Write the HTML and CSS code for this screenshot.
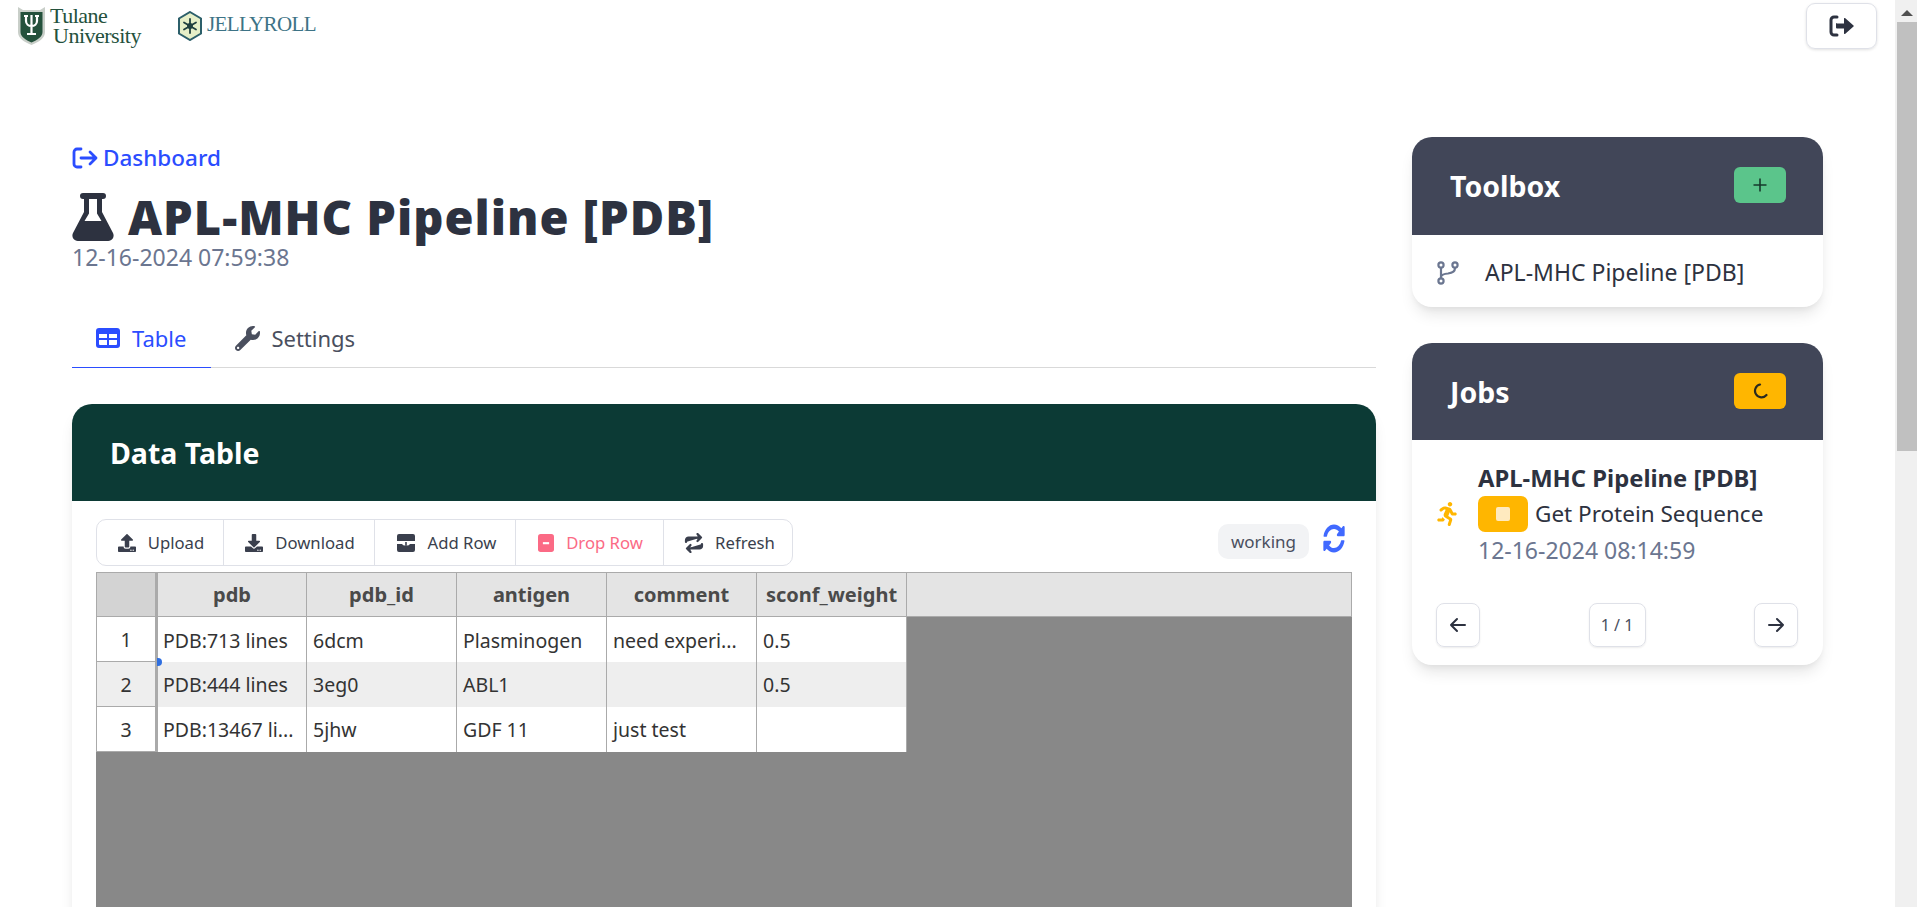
FILE: index.html
```html
<!DOCTYPE html>
<html lang="en">
<head>
<meta charset="utf-8">
<title>APL-MHC Pipeline [PDB]</title>
<link rel="stylesheet" href="styles.css">
</head>
<body>
<div class="page">
	<header class="topbar">
		<div class="logos">
			<div class="logo-tulane">
				<svg class="shield" viewBox="0 0 27 38">
					<path d="M0 0l5 3h17l5-3v25c0 6-6 10-13.500 13C6 35 0 31 0 25z" fill="#c9cfc9"/>
					<path d="M2.500 5h22v20c0 4.500-5 8-11 10.500C7.500 33 2.500 29.500 2.500 25z" fill="#24513c"/>
					<path d="M13.500 8v19M9 27h9M6 9h4M17 9h4M8 9v5c0 3 2.500 5 5.500 5s5.500-2 5.500-5V9" fill="none" stroke="#fff" stroke-width="2.200"/>
				</svg>
				<div class="tulane-text"><span>Tulane</span><span class="tulane-low">University</span></div>
			</div>
			<div class="logo-jelly">
				<svg class="hex" viewBox="0 0 24 30">
					<path d="M12 1l11 6.500v15L12 29 1 22.500v-15z" fill="#e6efc8" stroke="#2c5f6a" stroke-width="2"/>
					<g stroke="#1f3f3f" stroke-width="1.800" stroke-linecap="round">
						<path d="M12 8v14M6 11.500l12 7M18 11.500l-12 7"/>
					</g>
					<circle cx="12" cy="15" r="3" fill="#1f3f3f"/>
				</svg>
				<span class="jelly-text">JELLYROLL</span>
			</div>
		</div>
		<button class="logout" type="button">
			<svg viewBox="0 0 26 22" width="26" height="22">
				<path d="M8 2H5a3 3 0 0 0-3 3v12a3 3 0 0 0 3 3h3" fill="none" stroke="#2d3240" stroke-width="3" stroke-linecap="round"/>
				<path d="M8 8.500h7V3.800a.8.800 0 0 1 1.300-.6l8.200 7.200a.8.800 0 0 1 0 1.200l-8.200 7.200a.8.800 0 0 1-1.300-.6v-4.700H8a1 1 0 0 1-1-1v-3.500a1 1 0 0 1 1-1z" fill="#2d3240"/>
			</svg>
		</button>
	</header>

	<div class="layout">
		<main class="main-col">
			<a class="back-link" href="#">
				<svg viewBox="0 0 26 24" width="26" height="24" fill="none" stroke="currentColor" stroke-width="2.800" stroke-linecap="round" stroke-linejoin="round">
					<path d="M9 3H5a3 3 0 0 0-3 3v12a3 3 0 0 0 3 3h4M9 12h15M18 6l6 6-6 6"/>
				</svg>
				Dashboard
			</a>
			<h1 class="title">
				<svg class="flask" viewBox="0 0 42 48" width="42" height="48">
					<path fill-rule="evenodd" fill="#2d3240" d="M11 0h20a3 3 0 0 1 0 6h-1v13l11 21a5.500 5.500 0 0 1-5 8H6a5.500 5.500 0 0 1-5-8l11-21V6h-1a3 3 0 0 1 0-6zM17 6v14.500L12.500 28h17L25 20.500V6z"/>
				</svg>
				APL-MHC Pipeline [PDB]
			</h1>
			<div class="stamp">12-16-2024 07:59:38</div>

			<nav class="tabs">
				<a class="tab tab-active" href="#">
					<svg viewBox="0 0 24 20" width="24" height="20">
						<rect width="24" height="20" rx="3" fill="currentColor"/>
						<path d="M3 6h8v4H3zM13 6h8v4h-8zM3 12h8v5H4a1 1 0 0 1-1-1zM13 12h8v4a1 1 0 0 1-1 1h-7z" fill="#fff"/>
					</svg>
					Table
				</a>
				<a class="tab tab-settings" href="#">
					<svg viewBox="0 0 512 512" width="25" height="25"><path fill="#4a4f5e" d="M507.73 109.1c-2.24-9.03-13.54-12.09-20.12-5.51l-74.36 74.36-67.88-11.31-11.31-67.88 74.36-74.36c6.62-6.62 3.43-17.9-5.66-20.16-47.38-11.74-99.55.91-136.58 37.93-39.64 39.64-50.55 97.1-34.05 147.2L18.74 402.76c-24.99 24.99-24.99 65.51 0 90.5 24.99 24.99 65.51 24.99 90.5 0l213.21-213.21c50.12 16.71 107.47 5.68 147.37-34.22 37.07-37.07 49.7-89.32 37.91-136.73zM64 472c-13.25 0-24-10.75-24-24 0-13.26 10.75-24 24-24s24 10.74 24 24c0 13.25-10.75 24-24 24z"/></svg>
					Settings
				</a>
			</nav>

			<section class="card data-card">
				<div class="card-head head-green"><h2>Data Table</h2></div>
				<div class="data-body">
					<div class="tool-row">
						<div class="toolbar">
							<button class="tool tool-upload" type="button">
								<svg viewBox="0 0 512 512" width="18" height="18"><path d="M296 384h-80c-13.3 0-24-10.7-24-24V192h-87.7c-17.8 0-26.7-21.5-14.1-34.1L242.3 5.700c7.500-7.500 19.800-7.500 27.300 0l152.200 152.200c12.600 12.600 3.700 34.100-14.100 34.100H320v168c0 13.300-10.700 24-24 24zm216-8v112c0 13.300-10.700 24-24 24H24c-13.300 0-24-10.700-24-24V376c0-13.300 10.700-24 24-24h136v8c0 30.900 25.100 56 56 56h80c30.900 0 56-25.100 56-56v-8h136c13.300 0 24 10.700 24 24zm-124 88c0-11-9-20-20-20s-20 9-20 20 9 20 20 20 20-9 20-20zm64 0c0-11-9-20-20-20s-20 9-20 20 9 20 20 20 20-9 20-20z"/></svg>
								Upload
							</button>
							<button class="tool tool-download" type="button">
								<svg viewBox="0 0 512 512" width="18" height="18"><path d="M216 0h80c13.300 0 24 10.700 24 24v168h87.700c17.800 0 26.700 21.500 14.100 34.100L269.700 378.300c-7.500 7.500-19.800 7.500-27.300 0L90.100 226.100c-12.600-12.600-3.700-34.100 14.100-34.100H192V24c0-13.300 10.700-24 24-24zm296 376v112c0 13.300-10.700 24-24 24H24c-13.300 0-24-10.700-24-24V376c0-13.300 10.700-24 24-24h146.700l49 49c20.100 20.100 52.500 20.100 72.600 0l49-49H488c13.300 0 24 10.700 24 24zm-124 88c0-11-9-20-20-20s-20 9-20 20 9 20 20 20 20-9 20-20zm64 0c0-11-9-20-20-20s-20 9-20 20 9 20 20 20 20-9 20-20z"/></svg>
								Download
							</button>
							<button class="tool tool-add" type="button">
								<svg viewBox="0 0 20 18" width="20" height="18">
									<path d="M3 0h14a2 2 0 0 1 2 2v5H1V2a2 2 0 0 1 2-2zM1 10h5l4 4 4-4h5v6a2 2 0 0 1-2 2H3a2 2 0 0 1-2-2z" fill="#3a3f4d"/>
									<path d="M10 8v6M7.500 11.500L10 14l2.500-2.500" fill="none" stroke="#3a3f4d" stroke-width="1.600"/>
								</svg>
								Add Row
							</button>
							<button class="tool tool-drop" type="button">
								<svg viewBox="0 0 18 20" width="16" height="18">
									<rect width="18" height="20" rx="3" fill="#fb6a85"/>
									<rect x="5.500" y="9" width="7" height="2.400" fill="#fff"/>
								</svg>
								Drop Row
							</button>
							<button class="tool tool-refresh" type="button">
								<svg viewBox="0 0 20 20" width="20" height="20" fill="none" stroke="#3a3f4d" stroke-width="2.200" stroke-linecap="round" stroke-linejoin="round">
									<path d="M2 9V7a2.500 2.500 0 0 1 2.500-2.500H17M13.500 1L17 4.500 13.500 8M18 11v2a2.500 2.500 0 0 1-2.500 2.500H3M6.500 12L3 15.500 6.500 19"/>
								</svg>
								Refresh
							</button>
						</div>
						<div class="status">
							<span class="status-chip">working</span>
							<svg viewBox="0 0 512 512" width="22" height="29" preserveAspectRatio="none"><path fill="#4069ff" d="M370.72 133.28C339.458 104.008 298.888 87.962 255.848 88c-77.458.068-144.328 53.178-162.791 126.85-1.344 5.363-6.122 9.15-11.651 9.15H24.103c-7.498 0-13.194-6.807-11.807-14.176C33.933 94.924 134.813 8 256 8c66.448 0 126.791 26.136 171.315 68.685L463.03 40.97C478.149 25.851 504 36.559 504 57.941V192c0 13.255-10.745 24-24 24H345.941c-21.382 0-32.09-25.851-16.971-40.971l41.75-41.749zM32 296h134.059c21.382 0 32.09 25.851 16.971 40.971l-41.75 41.75c31.262 29.273 71.835 45.319 114.876 45.28 77.418-.07 144.315-53.144 162.787-126.849 1.344-5.363 6.122-9.15 11.651-9.15h57.304c7.498 0 13.194 6.807 11.807 14.176C478.067 417.076 377.187 504 256 504c-66.448 0-126.791-26.136-171.315-68.685L48.97 471.03C33.851 486.149 8 475.441 8 454.059V320c0-13.255 10.745-24 24-24z"/></svg>
						</div>
					</div>
					<div class="grid-wrap">
						<table class="grid">
							<colgroup>
								<col class="col-index">
								<col class="col-data">
								<col class="col-data">
								<col class="col-data">
								<col class="col-data">
								<col class="col-data">
								<col>
							</colgroup>
							<thead>
								<tr>
									<th class="corner"></th>
									<th>pdb</th>
									<th>pdb_id</th>
									<th>antigen</th>
									<th>comment</th>
									<th>sconf_weight</th>
									<th></th>
								</tr>
							</thead>
							<tbody>
								<tr>
									<th class="row-head">1</th>
									<td class="first-cell">PDB:713 lines<i class="handle"></i></td>
									<td>6dcm</td>
									<td>Plasminogen</td>
									<td>need experi...</td>
									<td>0.5</td>
								</tr>
								<tr class="row-alt">
									<th class="row-head">2</th>
									<td class="pdb-cell">PDB:444 lines</td>
									<td>3eg0</td>
									<td>ABL1</td>
									<td></td>
									<td>0.5</td>
								</tr>
								<tr>
									<th class="row-head">3</th>
									<td class="pdb-cell">PDB:13467 li...</td>
									<td>5jhw</td>
									<td>GDF 11</td>
									<td>just test</td>
									<td></td>
								</tr>
							</tbody>
						</table>
					</div>
				</div>
			</section>
		</main>

		<aside class="side-col">
			<section class="card">
				<div class="card-head head-slate">
					<h2>Toolbox</h2>
					<button class="head-btn btn-green" type="button">
						<svg viewBox="0 0 16 16" width="16" height="16"><path d="M8 1.500v13M1.500 8h13" stroke="#17392c" stroke-width="1.600" fill="none"/></svg>
					</button>
				</div>
				<div class="tool-item">
					<svg viewBox="0 0 22 24" width="22" height="24" fill="none" stroke="#6b7690" stroke-width="2.200">
						<circle cx="4" cy="4" r="2.600"/>
						<circle cx="4" cy="20" r="2.600"/>
						<circle cx="18" cy="4" r="2.600"/>
						<path d="M4 7v10M18 7c0 4-3 5-7 5.500-3 .3-6 .8-7 3"/>
					</svg>
					<span>APL-MHC Pipeline [PDB]</span>
				</div>
			</section>

			<section class="card">
				<div class="card-head head-slate head-jobs">
					<h2>Jobs</h2>
					<button class="head-btn btn-amber" type="button">
						<svg viewBox="0 0 16 16" width="16" height="16"><path d="M8 1.500A6.500 6.500 0 1 0 14.500 12" stroke="#2a2a20" stroke-width="2.200" fill="none" stroke-linecap="round"/></svg>
					</button>
				</div>
				<div class="job">
					<svg class="runner" viewBox="0 0 416 512" width="20" height="24"><path fill="#ffb600" d="M272 96c26.510 0 48-21.490 48-48S298.510 0 272 0s-48 21.490-48 48 21.490 48 48 48zM113.690 317.470l-14.800 34.520H32c-17.670 0-32 14.330-32 32s14.330 32 32 32h77.450c19.250 0 36.580-11.440 44.110-29.090l8.790-20.520-10.670-6.300c-17.320-10.230-30.060-25.370-37.990-42.610zM384 223.990h-44.030l-26.060-53.250c-12.500-25.550-35.450-44.230-61.780-50.940l-71.080-21.140c-28.300-6.800-57.770-.55-80.840 17.140l-39.670 30.410c-14.030 10.750-16.690 30.830-5.920 44.860s30.840 16.660 44.860 5.920l39.690-30.410c7.670-5.890 17.440-8 25.270-6.140l14.700 4.370-37.460 87.390c-12.620 29.480-1.310 64.010 26.300 80.310l84.980 50.170-27.470 87.730c-5.280 16.860 4.110 34.810 20.970 40.090 3.190 1 6.410 1.480 9.580 1.480 13.610 0 26.230-8.770 30.520-22.450l31.640-101.060c5.910-20.770-2.890-43.080-21.640-54.390l-61.240-36.140 31.310-78.280 20.270 41.430c8 16.340 24.920 26.890 43.110 26.890H384c17.670 0 32-14.330 32-32s-14.330-31.990-32-31.990z"/></svg>
					<div class="job-info">
						<div class="job-name">APL-MHC Pipeline [PDB]</div>
						<div class="job-step"><span class="step-badge"><i></i></span>Get Protein Sequence</div>
						<div class="job-time">12-16-2024 08:14:59</div>
					</div>
				</div>
				<div class="pager">
					<button class="page-btn" type="button">
						<svg viewBox="0 0 18 16" width="18" height="16" fill="none" stroke="#2d3240" stroke-width="2" stroke-linecap="round" stroke-linejoin="round"><path d="M16 8H2M8 2L2 8l6 6"/></svg>
					</button>
					<span class="page-btn page-count">1 / 1</span>
					<button class="page-btn" type="button">
						<svg viewBox="0 0 18 16" width="18" height="16" fill="none" stroke="#2d3240" stroke-width="2" stroke-linecap="round" stroke-linejoin="round"><path d="M2 8h14M10 2l6 6-6 6"/></svg>
					</button>
				</div>
			</section>
		</aside>
	</div>
</div>

<div class="scrollbar">
	<div class="scroll-arrow"></div>
	<div class="scroll-thumb"></div>
</div>
</body>
</html>
```

FILE: styles.css
```css
* {
	box-sizing: border-box;
	margin: 0;
	padding: 0;
}

html, body {
	height: 100%;
	overflow: hidden;
}

body {
	display: flex;
	background: #fff;
	color: #2d3240;
	font: 22.5px/1.5 "Noto Sans", "Open Sans", sans-serif;
}

a {
	text-decoration: none;
	color: inherit;
}

button {
	font: inherit;
	background: none;
	border: 0;
}

.page {
	flex: 1;
	min-width: 0;
	overflow: hidden;
}

/* top bar */
.topbar {
	display: flex;
	justify-content: space-between;
	align-items: flex-start;
	height: 54px;
	padding: 3px 18px 0 18px;
}

.logos {
	display: flex;
	align-items: center;
	gap: 37px;
	height: 45px;
}

.logo-tulane {
	display: flex;
	align-items: center;
	gap: 5px;
}

.shield {
	width: 27px;
	height: 38px;
}

.tulane-text {
	display: flex;
	flex-direction: column;
	font: 22px/20px "Liberation Serif", serif;
	letter-spacing: -.5px;
	color: #24513c;
}

.tulane-low {
	margin-left: 3px;
}

.logo-jelly {
	display: flex;
	align-items: center;
	gap: 5px;
}

.hex {
	width: 24px;
	height: 30px;
}

.jelly-text {
	margin-top: -2px;
	font: 21px/1 "Liberation Serif", serif;
	letter-spacing: -.6px;
	color: #3d7386;
}

.logout {
	display: flex;
	align-items: center;
	justify-content: center;
	width: 71px;
	height: 46px;
	border: 1px solid #dfe1e8;
	border-radius: 9px;
	box-shadow: 0 1px 3px rgba(0, 0, 0, .12);
}

/* main layout */
.layout {
	display: grid;
	grid-template-columns: 1304px 411px;
	gap: 36px;
	padding: 83px 0 0 72px;
}

.back-link {
	display: flex;
	align-items: center;
	gap: 5px;
	height: 30px;
	margin-top: 6px;
	font-size: 22.500px;
	font-weight: 500;
	color: #2b4dff;
}

.title {
	display: flex;
	align-items: center;
	gap: 14px;
	margin-top: 15px;
	height: 56px;
	padding-top: 1px;
	font-size: 47px;
	line-height: 56px;
	font-weight: 900;
	letter-spacing: 1px;
	white-space: nowrap;
}

.stamp {
	font-size: 23px;
	line-height: 26px;
	color: #6b7690;
}

.tabs {
	display: flex;
	margin-top: 42px;
	height: 56px;
	border-bottom: 1px solid #d9d9d9;
}

.tab {
	display: flex;
	align-items: center;
	gap: 12px;
	padding: 0 24px 3px;
	height: 56px;
	font-size: 22px;
	color: #4a4f5e;
}

.tab-active {
	padding-right: 25px;
	color: #2b4dff;
	border-bottom: 1px solid #2b4dff;
}

.tab-settings {
	gap: 11px;
}

/* cards */
.card {
	background: #fff;
	border-radius: 20px;
	box-shadow: 0 10px 15px -3px rgba(0, 0, 0, .1), 0 4px 6px -2px rgba(0, 0, 0, .05);
	overflow: hidden;
}

.data-card {
	margin-top: 36px;
}

.side-col {
	display: flex;
	flex-direction: column;
	gap: 36px;
}

.card-head {
	display: flex;
	align-items: center;
	justify-content: space-between;
	height: 98px;
	padding: 0 37px 0 38px;
}

.head-jobs,
.head-green {
	height: 97px;
	padding-top: 1px;
}

.card-head h2 {
	font-size: 28.500px;
	font-weight: 700;
	color: #fff;
}

.head-green {
	background: #0c3a35;
}

.head-slate {
	background: #414658;
}

.head-btn {
	display: flex;
	align-items: center;
	justify-content: center;
	width: 52px;
	height: 36px;
	margin-bottom: 3px;
	border-radius: 6px;
}

.head-jobs .head-btn {
	margin-bottom: 2px;
}

.btn-green {
	background: #5bc58b;
}

.btn-amber {
	background: #ffb600;
}

/* data table card */
.data-body {
	padding: 18px 24px 0;
}

.tool-row {
	display: flex;
	justify-content: space-between;
	height: 53px;
}

.toolbar {
	display: flex;
	height: 47px;
	border: 1px solid #dfe1e8;
	border-radius: 10px;
}

.tool {
	display: flex;
	align-items: center;
	justify-content: center;
	gap: 12px;
	padding-left: 2px;
	font-size: 16.700px;
	color: #3a3f4d;
	border-right: 1px solid #dfe1e8;
}

.tool svg {
	fill: #3a3f4d;
}

.tool-upload {
	width: 127px;
}

.tool-download {
	width: 151px;
}

.tool-add {
	width: 141px;
}

.tool-drop {
	width: 148px;
	color: #fb6a85;
}

.tool-refresh {
	width: 128px;
	gap: 11px;
	padding-left: 3px;
	border-right: 0;
}

.status {
	display: flex;
	align-items: flex-start;
	gap: 14px;
	padding-top: 5px;
}

.status-chip {
	height: 35px;
	padding: 0 13px;
	border-radius: 10px;
	background: #f2f3f5;
	font-size: 17px;
	line-height: 35px;
	color: #4a4f5e;
}

.status svg {
	margin-right: 7px;
}

.grid-wrap {
	height: 700px;
	background: #888;
}

.grid {
	width: 100%;
	table-layout: fixed;
	border-collapse: collapse;
	font-size: 19.500px;
	color: #333;
}

.col-index {
	width: 60px;
}

.col-data {
	width: 150px;
}

.grid thead th {
	height: 44px;
	background: #e4e4e4;
	border: 1px solid #aaa;
	font-size: 20px;
	font-weight: 700;
	color: #4a4a4a;
}

.grid thead .corner {
	background: #d3d3d3;
	border-right: 3px solid #aaa;
}

.grid .row-head {
	height: 45px;
	padding-top: 1px;
	background: inherit;
	border: 1px solid #aaa;
	border-right: 3px solid #aaa;
	font-weight: 400;
}

.grid tbody tr {
	background: #fff;
}

.grid .row-alt {
	background: #eee;
}

.grid td {
	height: 45px;
	padding: 2px 6px 0;
	border-right: 1px solid #aaa;
	white-space: nowrap;
	overflow: hidden;
}

.grid .pdb-cell,
.grid .first-cell {
	padding-left: 5px;
}

.grid .first-cell {
	position: relative;
	overflow: visible;
}

.handle {
	position: absolute;
	left: -1px;
	bottom: -4px;
	width: 5px;
	height: 8px;
	border-radius: 0 4px 4px 0;
	background: #2f6fe0;
}

/* side column */
.tool-item {
	display: flex;
	align-items: center;
	gap: 26px;
	height: 72px;
	padding: 3px 25px 0;
	font-size: 23px;
}

.job {
	display: flex;
	align-items: center;
	gap: 21px;
	padding: 20px 25px 0;
}

.job-name {
	font-size: 23.800px;
	font-weight: 700;
	line-height: 36px;
	white-space: nowrap;
}

.job-step {
	display: flex;
	align-items: center;
	gap: 7px;
	height: 36px;
	white-space: nowrap;
}

.step-badge {
	display: flex;
	align-items: center;
	justify-content: center;
	width: 50px;
	height: 36px;
	border-radius: 7px;
	background: #ffb600;
}

.step-badge i {
	width: 14px;
	height: 14px;
	border-radius: 2px;
	background: #ffeabf;
}

.job-time {
	font-size: 23px;
	line-height: 36px;
	color: #6b7690;
}

.pager {
	display: flex;
	justify-content: space-between;
	align-items: center;
	margin-top: 35px;
	padding: 0 25px 18px 24px;
}

.page-btn {
	display: flex;
	align-items: center;
	justify-content: center;
	width: 44px;
	height: 44px;
	border: 1px solid #dfe1e8;
	border-radius: 8px;
	box-shadow: 0 1px 2px rgba(0, 0, 0, .08);
}

.page-count {
	width: 57px;
	font-size: 16px;
	color: #4a4f5e;
}

/* browser scrollbar */
.scrollbar {
	flex: 0 0 22px;
	padding-left: 2px;
	background: #f0f0f0;
}

.scroll-arrow {
	width: 0;
	height: 0;
	margin: 10px auto 6px;
	border: 6px solid transparent;
	border-top: 0;
	border-bottom-color: #505050;
}

.scroll-thumb {
	height: 429px;
	margin-top: 5px;
	background: #c0c0c0;
}
```
